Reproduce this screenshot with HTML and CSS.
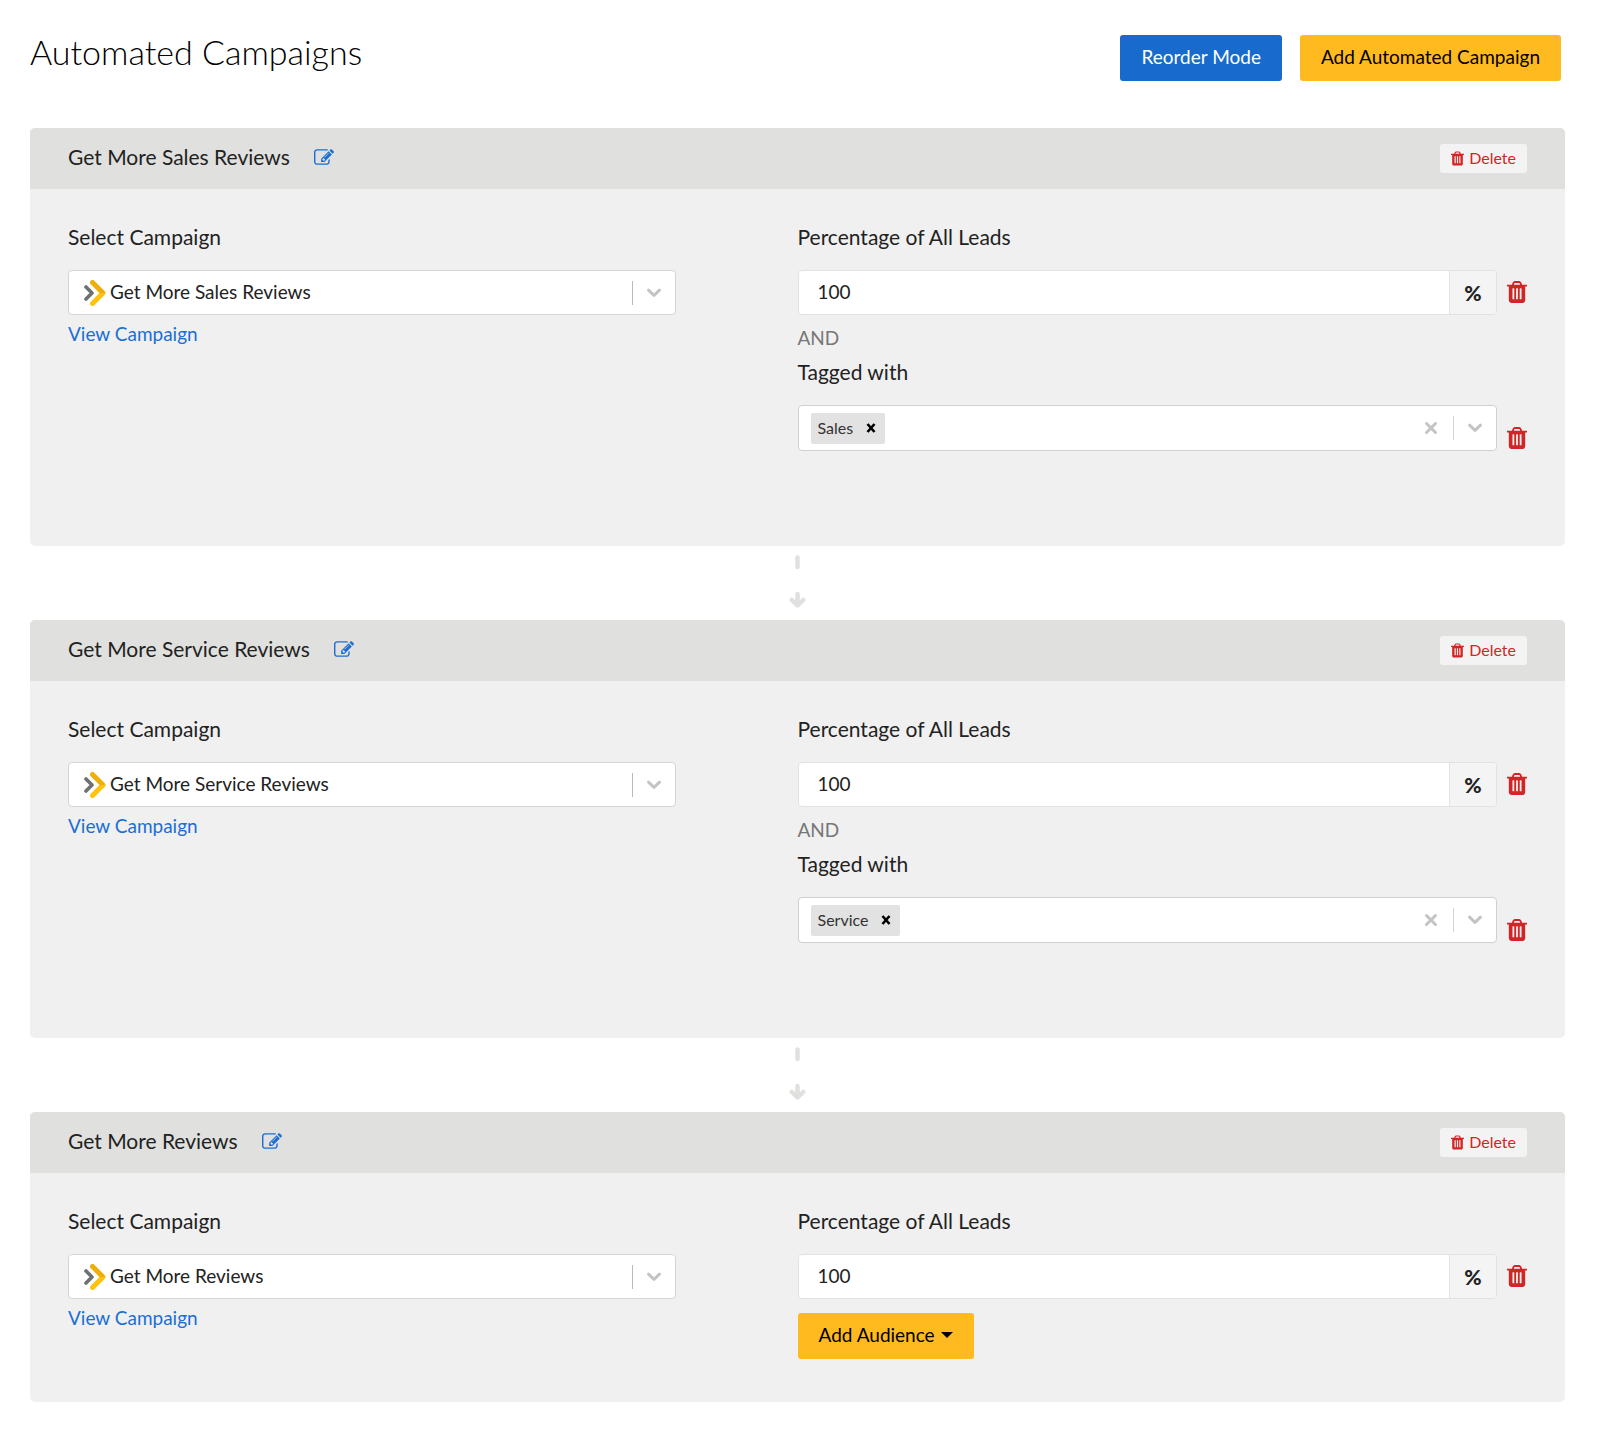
FILE: index.html
```html
<!DOCTYPE html>
<html lang="en">
<head>
<meta charset="utf-8">
<meta name="viewport" content="width=device-width, initial-scale=1">
<title>Automated Campaigns</title>
<link rel="stylesheet" href="styles.css">
</head>
<body>
<svg class="sprite" aria-hidden="true">
  <symbol id="trash" viewBox="192 128 1408 1536"><path fill="currentColor" d="M704 1376v-704q0-14-9-23t-23-9h-64q-14 0-23 9t-9 23v704q0 14 9 23t23 9h64q14 0 23-9t9-23zm256 0v-704q0-14-9-23t-23-9h-64q-14 0-23 9t-9 23v704q0 14 9 23t23 9h64q14 0 23-9t9-23zm256 0v-704q0-14-9-23t-23-9h-64q-14 0-23 9t-9 23v704q0 14 9 23t23 9h64q14 0 23-9t9-23zm-544-992h448l-48-117q-7-9-17-11h-317q-10 2-17 11zm928 32v64q0 14-9 23t-23 9h-96v948q0 83-47 143.5t-113 60.5h-832q-66 0-113-58.5t-47-141.5v-952h-96q-14 0-23-9t-9-23v-64q0-14 9-23t23-9h309l70-167q15-37 54-63t79-26h320q40 0 79 26t54 63l70 167h309q14 0 23 9t9 23z"/></symbol>
  <symbol id="edit" viewBox="0 128 1792 1408"><path fill="currentColor" d="M888 1184l116-116-152-152-116 116v56h96v96h56zm440-720q-16-16-33 1l-350 350q-17 17-1 33t33-1l350-350q17-17 1-33zm80 594v190q0 119-84.5 203.5t-203.5 84.5h-832q-119 0-203.5-84.5t-84.5-203.5v-832q0-119 84.5-203.5t203.5-84.5h832q63 0 117 25 15 7 18 23 3 17-9 29l-49 49q-14 14-32 8-23-6-45-6h-832q-66 0-113 47t-47 113v832q0 66 47 113t113 47h832q66 0 113-47t47-113v-126q0-13 9-22l64-64q15-15 35-7t20 29zm-96-738l288 288-672 672h-288v-288zm444 132l-92 92-288-288 92-92q28-28 68-28t68 28l152 152q28 28 28 68t-28 68z"/></symbol>
  <symbol id="chevron" viewBox="0 0 16 10"><path fill="none" stroke="currentColor" stroke-width="3" stroke-linecap="round" stroke-linejoin="round" d="M2.5 2.2 8 7.4l5.500-5.200"/></symbol>
  <symbol id="cross" viewBox="0 0 14 14"><path fill="none" stroke="currentColor" stroke-width="3" stroke-linecap="round" d="M2.500 2.500l9 9M11.500 2.500l-9 9"/></symbol>
  <symbol id="small-cross" viewBox="0 0 10 10"><path fill="none" stroke="currentColor" stroke-width="2.600" d="M1.500 1l7 8M8.500 1l-7 8"/></symbol>
  <symbol id="brand" viewBox="0 0 22 26"><path fill="none" stroke="#6f7072" stroke-width="3.600" stroke-linecap="round" stroke-linejoin="round" d="M2 7l6 6-6 6"/><path fill="none" stroke="#ffc20e" stroke-width="5" stroke-linecap="round" stroke-linejoin="round" d="M8.500 23.500 19 13"/><path fill="none" stroke="#eeaf0a" stroke-width="5" stroke-linecap="round" d="M8.500 2.500 18 12"/><path fill="#ffc20e" d="M15 13h6.500l-2 3-4.500 1z"/></symbol>
  <symbol id="flow" viewBox="0 0 17 54"><path fill="none" stroke="#e0e0de" stroke-width="4.500" stroke-linecap="round" stroke-linejoin="round" d="M8.500 3.500v9.500M8.500 40v11M2.800 46l5.700 5.500 5.700-5.500"/></symbol>
</svg>

<main class="page">
  <header class="page-header">
    <h1 class="page-title">Automated Campaigns</h1>
    <div class="page-actions">
      <button type="button" class="btn btn-primary">Reorder Mode</button>
      <button type="button" class="btn btn-accent">Add Automated Campaign</button>
    </div>
  </header>

  <section class="card">
    <header class="card-header">
      <h2 class="card-title">Get More Sales Reviews</h2>
      <button type="button" class="icon-btn edit" aria-label="Rename"><svg class="edit-icon"><use href="#edit"/></svg></button>
      <button type="button" class="delete"><svg class="delete-icon"><use href="#trash"/></svg>Delete</button>
    </header>
    <div class="card-body">
      <div class="column">
        <label class="label" for="campaign-1">Select Campaign</label>
        <div class="campaign">
          <svg class="brand-icon"><use href="#brand"/></svg>
          <select class="campaign-select" id="campaign-1"><option>Get More Sales Reviews</option></select>
          <span class="indicator"><svg class="chevron"><use href="#chevron"/></svg></span>
        </div>
        <a class="link" href="#view-1">View Campaign</a>
      </div>
      <div class="column">
        <label class="label" for="percent-1">Percentage of All Leads</label>
        <div class="row">
          <div class="percent"><input class="percent-input" id="percent-1" type="text" value="100"><span class="addon">%</span></div>
          <button type="button" class="icon-btn remove" aria-label="Remove"><svg class="trash-icon"><use href="#trash"/></svg></button>
        </div>
        <p class="and">AND</p>
        <label class="label" for="tags-1">Tagged with</label>
        <div class="row row-tags">
          <div class="tags">
            <span class="tag">Sales<button type="button" class="icon-btn tag-remove" aria-label="Remove Sales"><svg class="tag-cross"><use href="#small-cross"/></svg></button></span>
            <input class="tags-input" id="tags-1" type="text">
            <button type="button" class="icon-btn clear" aria-label="Clear"><svg class="cross"><use href="#cross"/></svg></button>
            <span class="indicator indicator-light"><svg class="chevron"><use href="#chevron"/></svg></span>
          </div>
          <button type="button" class="icon-btn remove" aria-label="Remove"><svg class="trash-icon"><use href="#trash"/></svg></button>
        </div>
      </div>
    </div>
  </section>

  <div class="connector"><svg class="flow-icon"><use href="#flow"/></svg></div>

  <section class="card">
    <header class="card-header">
      <h2 class="card-title">Get More Service Reviews</h2>
      <button type="button" class="icon-btn edit" aria-label="Rename"><svg class="edit-icon"><use href="#edit"/></svg></button>
      <button type="button" class="delete"><svg class="delete-icon"><use href="#trash"/></svg>Delete</button>
    </header>
    <div class="card-body">
      <div class="column">
        <label class="label" for="campaign-2">Select Campaign</label>
        <div class="campaign">
          <svg class="brand-icon"><use href="#brand"/></svg>
          <select class="campaign-select" id="campaign-2"><option>Get More Service Reviews</option></select>
          <span class="indicator"><svg class="chevron"><use href="#chevron"/></svg></span>
        </div>
        <a class="link" href="#view-2">View Campaign</a>
      </div>
      <div class="column">
        <label class="label" for="percent-2">Percentage of All Leads</label>
        <div class="row">
          <div class="percent"><input class="percent-input" id="percent-2" type="text" value="100"><span class="addon">%</span></div>
          <button type="button" class="icon-btn remove" aria-label="Remove"><svg class="trash-icon"><use href="#trash"/></svg></button>
        </div>
        <p class="and">AND</p>
        <label class="label" for="tags-2">Tagged with</label>
        <div class="row row-tags">
          <div class="tags">
            <span class="tag">Service<button type="button" class="icon-btn tag-remove" aria-label="Remove Service"><svg class="tag-cross"><use href="#small-cross"/></svg></button></span>
            <input class="tags-input" id="tags-2" type="text">
            <button type="button" class="icon-btn clear" aria-label="Clear"><svg class="cross"><use href="#cross"/></svg></button>
            <span class="indicator indicator-light"><svg class="chevron"><use href="#chevron"/></svg></span>
          </div>
          <button type="button" class="icon-btn remove" aria-label="Remove"><svg class="trash-icon"><use href="#trash"/></svg></button>
        </div>
      </div>
    </div>
  </section>

  <div class="connector"><svg class="flow-icon"><use href="#flow"/></svg></div>

  <section class="card">
    <header class="card-header">
      <h2 class="card-title">Get More Reviews</h2>
      <button type="button" class="icon-btn edit" aria-label="Rename"><svg class="edit-icon"><use href="#edit"/></svg></button>
      <button type="button" class="delete"><svg class="delete-icon"><use href="#trash"/></svg>Delete</button>
    </header>
    <div class="card-body">
      <div class="column">
        <label class="label" for="campaign-3">Select Campaign</label>
        <div class="campaign">
          <svg class="brand-icon"><use href="#brand"/></svg>
          <select class="campaign-select" id="campaign-3"><option>Get More Reviews</option></select>
          <span class="indicator"><svg class="chevron"><use href="#chevron"/></svg></span>
        </div>
        <a class="link" href="#view-3">View Campaign</a>
      </div>
      <div class="column">
        <label class="label" for="percent-3">Percentage of All Leads</label>
        <div class="row">
          <div class="percent"><input class="percent-input" id="percent-3" type="text" value="100"><span class="addon">%</span></div>
          <button type="button" class="icon-btn remove" aria-label="Remove"><svg class="trash-icon"><use href="#trash"/></svg></button>
        </div>
        <button type="button" class="btn btn-accent add-audience">Add Audience<span class="caret"></span></button>
      </div>
    </div>
  </section>
</main>
</body>
</html>
```
FILE: styles.css
```css
* { box-sizing: border-box; }

body {
  margin: 0;
  background: #fff;
  color: #222;
  font-family: Lato, "Open Sans", sans-serif;
  font-size: 19px;
  line-height: 28px;
}

button, input, select { font: inherit; color: inherit; }
button { cursor: pointer; }
svg { display: block; flex: none; }
.sprite { position: absolute; width: 0; height: 0; }

.page { padding: 35px 35px 30px 30px; }

.page-header {
  display: flex;
  justify-content: space-between;
  align-items: flex-start;
  padding-right: 4px;
  margin-bottom: 47px;
}
.page-title {
  margin: 0;
  font-size: 34px;
  font-weight: 300;
  line-height: 34px;
  color: #000;
}
.page-actions { display: flex; gap: 18px; }

.btn {
  height: 46px;
  padding: 0 21px 2px;
  border: 0;
  border-radius: 3px;
  white-space: nowrap;
}
.btn-primary { background: #186acd; color: #fff; }
.btn-accent { background: #ffba1f; color: #000; }

.card { border-radius: 5px; background: #f0f0f0; overflow: hidden; }
.card-header {
  display: flex;
  align-items: center;
  height: 61px;
  padding: 0 38px;
  background: #e0e0de;
}
.card-title, .label { font-size: 21px; font-weight: 400; line-height: 30px; }
.card-title { margin: 0; }

.icon-btn { flex: none; padding: 0; border: 0; background: none; color: #d22626; }
.edit { margin-left: 24px; color: #1b6fd4; }
.card-title, .edit { padding-bottom: 3px; }
.edit-icon { width: 20px; height: 16px; }

.delete {
  display: flex;
  align-items: center;
  gap: 5px;
  height: 29px;
  margin-left: auto;
  padding: 0 11px 1px;
  border: 0;
  border-radius: 3px;
  background: #f3f3f3;
  color: #d22626;
  font-size: 16px;
}
.delete-icon { width: 13px; height: 15px; }

.card-body {
  display: grid;
  grid-template-columns: 1fr 1fr;
  padding: 33px 38px 43px;
}
.label { display: block; margin-bottom: 18px; }

.campaign {
  display: grid;
  grid-template-columns: 41px 1fr 43px;
  align-items: center;
  width: 83.333%;
  height: 45px;
  margin-bottom: 5px;
  border: 1px solid #d5d5d5;
  border-radius: 4px;
  background: #fff;
}
.brand-icon { width: 22px; height: 26px; margin-left: 15px; grid-area: 1 / 1; }
.campaign-select {
  grid-area: 1 / 1 / 2 / 4;
  height: 43px;
  padding: 0 44px 2px 41px;
  border: 0;
  background: none;
  appearance: none;
}
.indicator {
  grid-area: 1 / 3;
  display: flex;
  align-items: center;
  justify-content: center;
  width: 43px;
  height: 24px;
  border-left: 1px solid #bbb;
  color: #c4c4c4;
  pointer-events: none;
}
.indicator-light { border-color: #d5d5d5; }
.chevron { width: 16px; height: 10px; }

.link { color: #1b6fd4; text-decoration: none; }

.row { display: flex; align-items: center; gap: 10px; }
.row-tags { align-items: flex-end; margin-bottom: 52px; }
.remove { padding-bottom: 2px; }
.percent, .tags {
  display: flex;
  flex: 1;
  align-items: center;
  min-width: 0;
  height: 45px;
  border: 1px solid #e2e2e2;
  border-radius: 4px;
  background: #fff;
}
.percent-input {
  flex: 1;
  min-width: 0;
  height: 43px;
  padding: 0 19px 2px;
  border: 0;
  background: none;
}
.addon {
  width: 47px;
  border-left: 1px solid #e2e2e2;
  border-radius: 0 3px 3px 0;
  background: #f4f4f4;
  font-size: 21px;
  font-weight: 900;
  line-height: 43px;
  text-align: center;
}
.trash-icon { width: 20px; height: 22px; }

.and { margin: 9px 0 5px; color: #777; }

.tags { height: 46px; padding-left: 12px; border-color: #d0d0d0; }
.tag {
  display: flex;
  align-items: center;
  height: 31px;
  padding: 0 9px 0 7px;
  border-radius: 2px;
  background: #e2e2e2;
  color: #333;
  font-size: 16px;
}
.tag-remove { margin-left: 13px; color: #000; }
.tag-cross { width: 10px; height: 10px; }
.tags-input { flex: 1; min-width: 0; border: 0; background: none; }
.clear { margin-right: 15px; color: #c4c4c4; }
.cross { width: 14px; height: 14px; }

.add-audience { display: flex; align-items: center; gap: 6px; margin-top: 14px; }
.caret {
  border: 6px solid transparent;
  border-top-color: #000;
  border-bottom: 0;
}

.connector { display: flex; justify-content: center; height: 74px; padding-top: 8px; }
.flow-icon { width: 17px; height: 54px; }
```
